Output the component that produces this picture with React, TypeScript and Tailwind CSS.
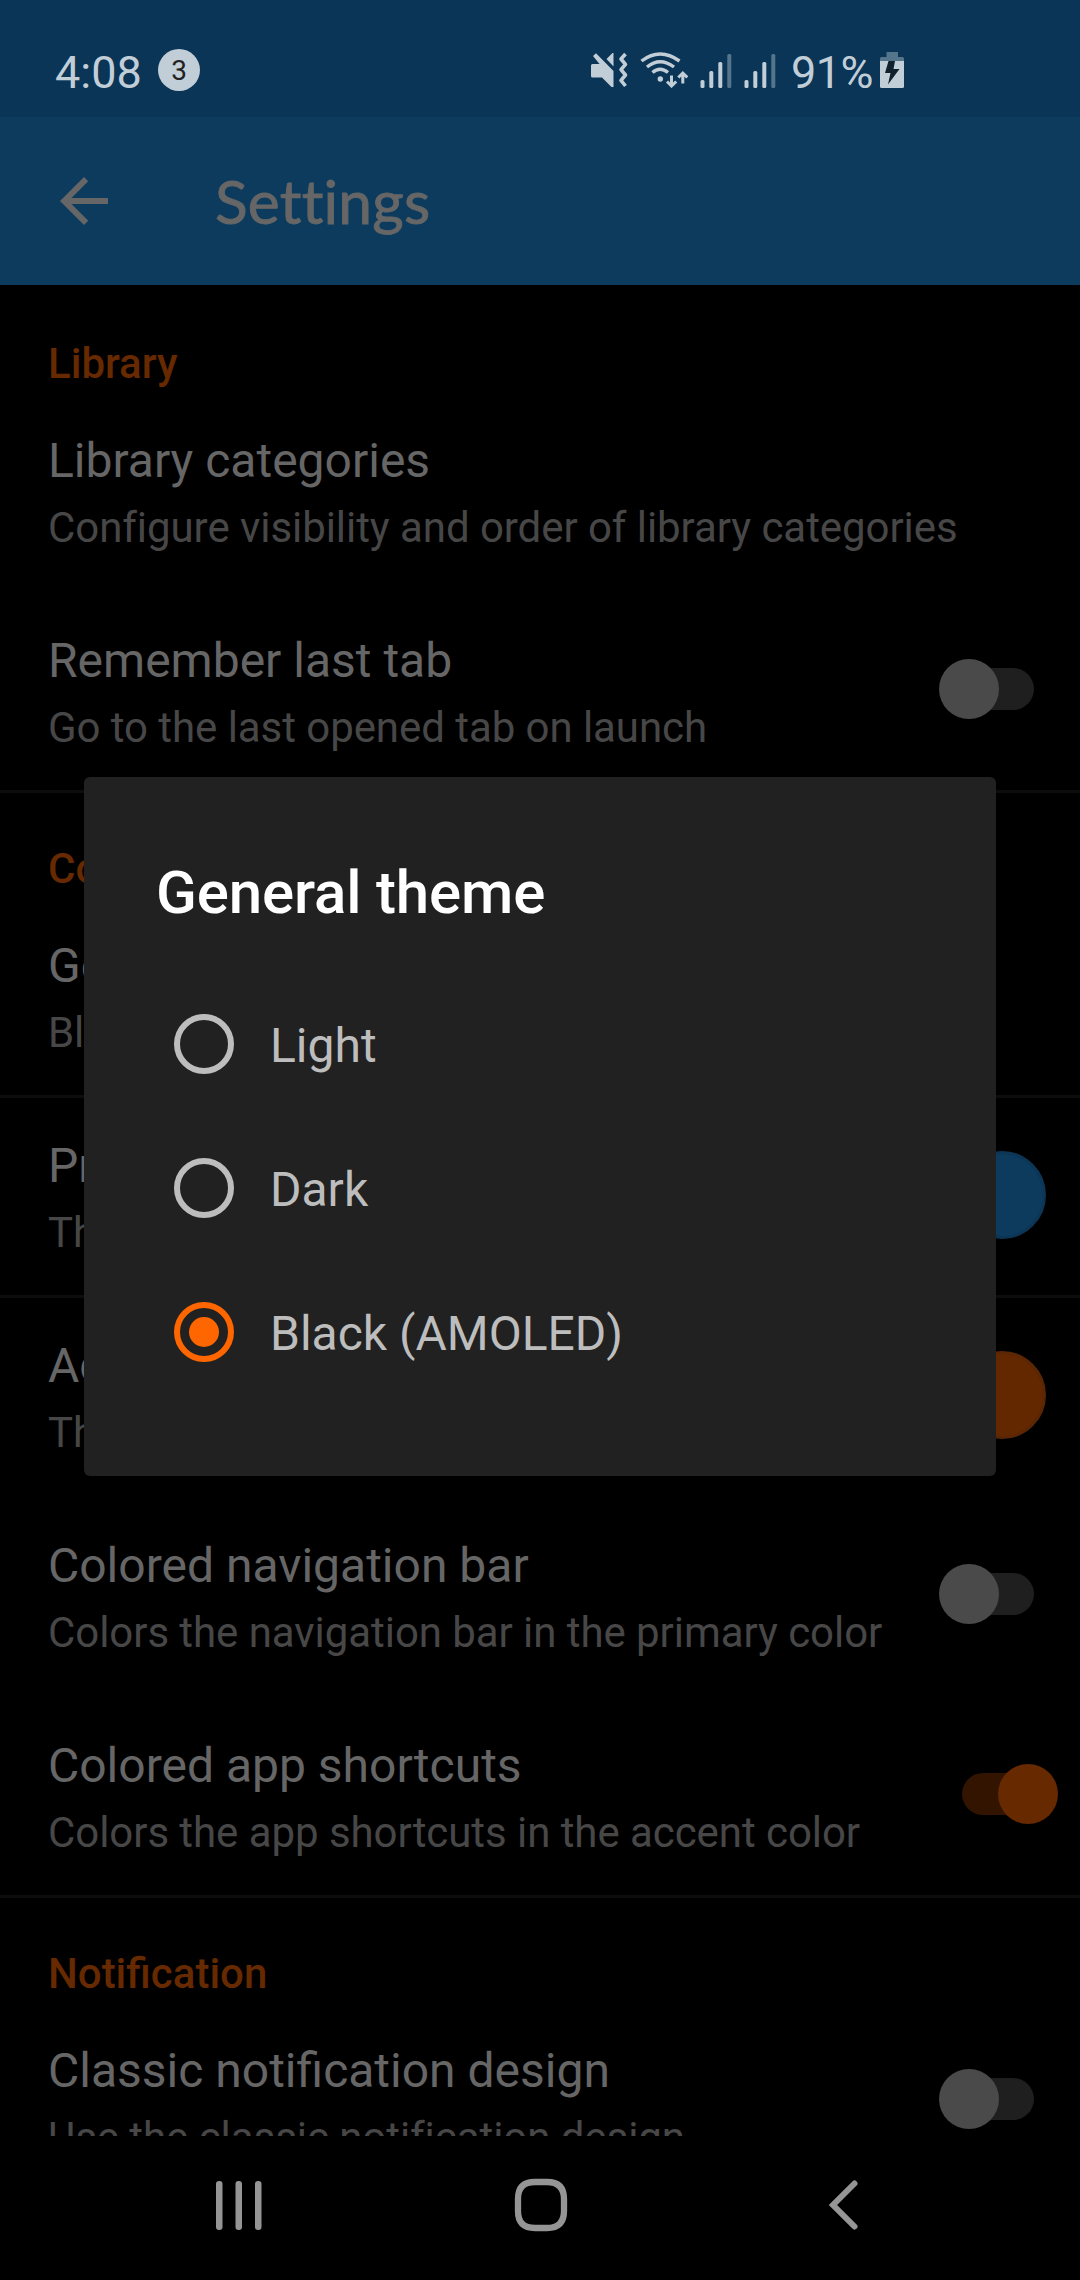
import React from "react";

const INK = "#c2ced7";

function MuteIcon() {
  return (
    <svg className="h-[36px] w-[37px]" viewBox="0 0 37 36" fill={INK}>
      <path d="M0 13.500Q0 12 1.500 12H8.500L2 4 5 1.200 22.500 19V35L20.500 35 11 25.500H1.500Q0 25.500 0 24Z" />
      <path d="M15.500 7 21.500 1 22.500 1V14.500Z" />
      <path d="M34.500 2 30 7 34.500 12.300 30 17.700 34.500 23 30 28.300 34.500 34" fill="none" stroke={INK} strokeWidth="3.600" strokeLinejoin="round" />
    </svg>
  );
}

function WifiIcon() {
  return (
    <svg className="h-[36px] w-[48px]" viewBox="0 0 48 36" fill="none" stroke={INK} strokeWidth="3.400">
      <path d="M1.500 9Q20 -5 39.500 9" />
      <path d="M7 15Q20 4.500 34 15" />
      <path d="M12.500 20.500Q20 14 28 20.500" />
      <circle cx="20.300" cy="27" r="2.700" fill={INK} stroke="none" />
      <path d="M31.500 23.500V33M27 29.500 31.500 34 36.200 29.500" strokeWidth="3" />
      <path d="M42.800 31.500V22M38.300 25.500 42.800 21 47.300 25.500" strokeWidth="3" />
    </svg>
  );
}

function SignalIcon() {
  return (
    <svg className="h-[36px] w-[32px]" viewBox="0 0 32 36" fill={INK}>
      <rect x="0.500" y="28" width="4" height="8" rx="1.500" />
      <rect x="9.300" y="19" width="4" height="17" rx="1.500" />
      <rect x="18.300" y="10" width="4" height="26" rx="1.500" />
      <rect x="27.300" y="2" width="4" height="34" rx="1.500" fill="#55758d" />
    </svg>
  );
}

function BatteryIcon() {
  return (
    <svg className="h-[36px] w-[24px]" viewBox="0 0 24 36">
      <path d="M6.500 0H18V5H22.500Q24 5 24 6.500V9H0V6.500Q0 5 1.500 5H6.500Z" fill="#55758d" />
      <path d="M0 9H24V34.500Q24 36 22.500 36H1.500Q0 36 0 34.500Z" fill={INK} />
      <path d="M8.500 9H15L13.500 17H19.500L8 32.500 10.500 21H5Z" fill="#10202c" />
    </svg>
  );
}

function StatusBar() {
  return (
    <div className="flex h-[117px] items-start bg-[#0b3556] pl-[55px] text-[#c2ced7]">
      <span className="mt-[46px] w-[103px] text-[45px] leading-[54px]">4:08</span>
      <span className="mt-[49px] flex size-[42px] items-center justify-center rounded-full bg-[#c2ced7] pt-[2px] text-[28px] leading-none text-[#222]">
        3
      </span>
      <div className="mt-[52px] ml-[391px] flex">
        <MuteIcon />
        <div className="ml-[12px]"><WifiIcon /></div>
        <div className="ml-[12px]"><SignalIcon /></div>
        <div className="ml-[12px]"><SignalIcon /></div>
      </div>
      <span className="mt-[46px] ml-[15px] w-[89px] text-[45px] leading-[54px] tracking-[-0.5px]">91%</span>
      <div className="mt-[52px]"><BatteryIcon /></div>
    </div>
  );
}

function Toolbar() {
  return (
    <header className="flex h-[168px] items-center bg-[#0c3b5e] pl-[48px] text-[#666]">
      <svg className="size-[72px]" viewBox="0 0 24 24" fill="currentColor">
        <path d="M20 11H7.830l5.590-5.590L12 4l-8 8 8 8 1.410-1.410L7.830 13H20v-2z" />
      </svg>
      <h1 className="ml-[95px] font-['Lato',sans-serif] text-[60.500px] leading-[72px] tracking-[0.2px] [font-variant-ligatures:common-ligatures] [-webkit-text-stroke:0.9px_#666]">Settings</h1>
    </header>
  );
}

function SectionHeader({ children, divider }: { children: string; divider?: boolean }) {
  return (
    <div className={`h-[105px] pl-[48px] ${divider ? "border-t-[3px] border-[#0d0d0d] pt-[51px]" : "pt-[54px]"}`}>
      <h2 className="text-[42px] leading-[49px] font-medium text-[#662900]">{children}</h2>
    </div>
  );
}

function Switch({ on }: { on?: boolean }) {
  return on ? (
    <div className="relative mr-[22px] flex h-[60px] w-[96px] items-center">
      <div className="h-[42px] w-[86px] rounded-full bg-[#331400]" />
      <div className="absolute right-0 size-[60px] rounded-full bg-[#662900]" />
    </div>
  ) : (
    <div className="relative mr-[46px] flex h-[60px] w-[95px] items-center justify-end">
      <div className="h-[42px] w-[86px] rounded-full bg-[#1f1f1f]" />
      <div className="absolute left-0 size-[60px] rounded-full bg-[#4a4a4a]" />
    </div>
  );
}

function Row({ title, summary, divider, children }: {
  title: string;
  summary: string;
  divider?: boolean;
  children?: React.ReactNode;
}) {
  return (
    <div className={`flex h-[200px] shrink-0 justify-between pl-[48px] whitespace-nowrap ${divider ? "border-t-[3px] border-[#0d0d0d] pt-[39px]" : "pt-[42px]"}`}>
      <div>
        <div className="pt-px text-[48px] leading-[56px] text-[#666]">{title}</div>
        <div className="mt-[14px] text-[42px] leading-[49px] tracking-[-0.06px] text-[#474747] [font-variant-ligatures:common-ligatures]">{summary}</div>
      </div>
      <div className="flex h-[114px] items-center">{children}</div>
    </div>
  );
}

function Radio({ label, checked }: { label: string; checked?: boolean }) {
  return (
    <label className="flex h-[144px] items-center pl-[90px]">
      <span className={`flex size-[60px] items-center justify-center rounded-full border-[6px] ${checked ? "border-[#ff6600]" : "border-[#bdbdbd]"}`}>
        {checked && <span className="size-[30px] rounded-full bg-[#ff6600]" />}
      </span>
      <span className="ml-[36px] pt-[4px] text-[48px] leading-[56px] text-[#bdbdbd]">{label}</span>
    </label>
  );
}

function ThemeDialog() {
  return (
    <div role="dialog" className="absolute top-[777px] left-[84px] h-[699px] w-[912px] rounded-[6px] bg-[#212121]">
      <h2 className="h-[195px] pt-[81px] pl-[72px] text-[60px] leading-[70px] font-medium tracking-[-0.15px] text-white">General theme</h2>
      <Radio label="Light" />
      <Radio label="Dark" />
      <Radio label="Black (AMOLED)" checked />
    </div>
  );
}

function NavBar() {
  return (
    <nav className="flex h-[144px] items-start bg-black pt-[42px] pl-[213px] text-[#959595]">
      <svg className="h-[54px] w-[52px]" viewBox="0 0 52 54" fill="currentColor">
        <rect x="3" y="3" width="6.500" height="49" rx="3" />
        <rect x="22.500" y="3" width="6.500" height="49" rx="3" />
        <rect x="42" y="3" width="6.500" height="49" rx="3" />
      </svg>
      <svg className="ml-[249px] h-[54px] w-[54px]" viewBox="0 0 54 54" fill="none" stroke="currentColor" strokeWidth="6.300">
        <path d="M21 4H33Q50 4 50 21V33Q50 50 33 50H21Q4 50 4 33V21Q4 4 21 4Z" />
      </svg>
      <svg className="ml-[258px] h-[54px] w-[36px]" viewBox="0 0 36 54" fill="none" stroke="currentColor" strokeWidth="6" strokeLinecap="round">
        <path d="M28.500 5.500 7 27 28.500 48.500" />
      </svg>
    </nav>
  );
}

export default function App() {
  return (
    <div className="relative flex h-[2280px] w-[1080px] flex-col overflow-hidden bg-black font-['Roboto',sans-serif]">
      <StatusBar />
      <Toolbar />
      <main className="flex h-[1851px] flex-col overflow-hidden">
        <section>
          <SectionHeader>Library</SectionHeader>
          <Row title="Library categories" summary="Configure visibility and order of library categories" />
          <Row title="Remember last tab" summary="Go to the last opened tab on launch"><Switch /></Row>
        </section>
        <section>
          <SectionHeader divider>Colors</SectionHeader>
          <Row title="General theme" summary="Black (AMOLED)" />
          <Row title="Primary color" summary="The primary theme color" divider>
            <div className="mt-[2px] mr-[34px] size-[88px] rounded-full border-[3px] border-[#0d3555] bg-[#0c3b5e]" />
          </Row>
          <Row title="Accent color" summary="The accent theme color" divider>
            <div className="mt-[2px] mr-[34px] size-[88px] rounded-full border-[3px] border-[#5a2603] bg-[#632800]" />
          </Row>
          <Row title="Colored navigation bar" summary="Colors the navigation bar in the primary color"><Switch /></Row>
          <Row title="Colored app shortcuts" summary="Colors the app shortcuts in the accent color"><Switch on /></Row>
        </section>
        <section>
          <SectionHeader divider>Notification</SectionHeader>
          <Row title="Classic notification design" summary="Use the classic notification design"><Switch /></Row>
        </section>
      </main>
      <NavBar />
      <ThemeDialog />
    </div>
  );
}
